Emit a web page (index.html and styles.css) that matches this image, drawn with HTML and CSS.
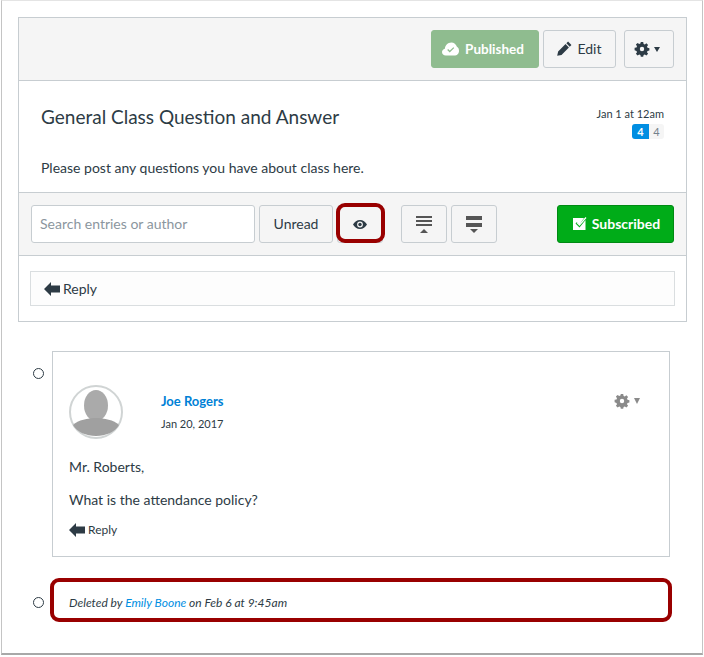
FILE: index.html
```html
<!DOCTYPE html>
<html lang="en">
<head>
<meta charset="utf-8">
<title>General Class Question and Answer</title>
<link rel="stylesheet" href="styles.css">
</head>
<body>
<div class="window">
  <section class="card">
    <header class="head-bar">
      <button class="btn btn-published">
        <svg class="ico-cloud" viewBox="0 0 18 14"><path fill="#fff" d="M4 14C1.8 14 0 12.4 0 10.3 0 8.4 1.3 7 3 6.700 3.400 3 6.300 0 9.800 0c2.900 0 5.300 2 6 4.700C17.300 5.500 18 7 18 9c0 2.800-2.200 5-5 5z"/><path fill="none" stroke="#8fbc8f" stroke-width="1.300" d="M6 7.500l2.200 2.200L12.500 5.500"/></svg>
        Published
      </button>
      <button class="btn btn-edit">
        <svg class="ico-pencil" viewBox="0 0 16 16"><path fill="#2d3b45" d="M11.800.6l3.600 3.600-1.800 1.800L10 2.400zM9.100 3.300l3.600 3.600-7.900 7.900-4.600 1 1-4.600z"/></svg>
        Edit
      </button>
      <button class="btn btn-gear">
        <svg class="ico-gear" viewBox="0 0 14 14"><use href="#gear"/></svg>
        <span class="caret"></span>
      </button>
    </header>
    <div class="topic">
      <div class="topic-top">
        <h1 class="topic-title">General Class Question and Answer</h1>
        <div class="topic-meta">
          <div class="topic-date">Jan 1 at 12am</div>
          <div class="badges"><span class="badge-blue">4</span><span class="badge-gray">4</span></div>
        </div>
      </div>
      <p class="topic-text">Please post any questions you have about class here.</p>
    </div>
    <div class="toolbar">
      <div class="search">Search entries or author</div>
      <button class="btn btn-unread">Unread</button>
      <button class="btn btn-eye">
        <svg class="ico-eye" viewBox="0 0 14 9"><path fill="#2d3b45" fill-rule="evenodd" d="M7 0c3 0 5.500 1.800 7 4.500C12.500 7.200 10 9 7 9S1.500 7.200 0 4.500C1.500 1.800 4 0 7 0zm0 1.600a2.900 2.900 0 1 0 0 5.800 2.900 2.900 0 0 0 0-5.800z"/><circle cx="7" cy="4.500" r="1.700" fill="#2d3b45"/></svg>
        <span class="eye-mark"></span>
      </button>
      <button class="btn btn-fold btn-collapse">
        <svg class="ico-fold" viewBox="0 0 16 17"><path fill="#555" d="M0 0h16v2H0zM0 4h16v2H0zM0 8h16v2H0zM8 13l4 4H4z"/></svg>
      </button>
      <button class="btn btn-fold">
        <svg class="ico-fold" viewBox="0 0 16 17"><path fill="#555" d="M0 0h16v4H0zM0 7h16v4H0zM4 13h8l-4 4z"/></svg>
      </button>
      <button class="btn btn-subscribed">
        <svg class="ico-check" viewBox="0 0 14 13"><path fill="#fff" d="M0 1h11L6.500 7.500 4 5 2.500 6.500l4 4L12.500 3v10H0z"/><path fill="none" stroke="#fff" stroke-width="1.300" d="M4 5.500l2.500 2.500L13 .5"/></svg>
        Subscribed
      </button>
    </div>
    <div class="reply-area">
      <div class="reply-box">
        <svg class="ico-reply" viewBox="0 0 16 14"><use href="#reply"/></svg>
        Reply
      </div>
    </div>
  </section>

  <section class="entries">
    <div class="entry-row">
      <span class="bullet"></span>
      <article class="entry">
        <div class="entry-head">
          <div class="avatar">
            <svg viewBox="0 0 54 54"><circle cx="27" cy="27" r="26" fill="#fff" stroke="#d0d4d4" stroke-width="2"/><ellipse cx="27" cy="20.500" rx="12" ry="15.500" fill="#aaa"/><path fill="#a0a0a0" d="M4 40c5-5 15-7 23-7s18 2 23 7c-4 7-13 11-23 11S8 47 4 40z"/></svg>
          </div>
          <div class="entry-author">
            <a class="author-link">Joe Rogers</a>
            <div class="entry-date">Jan 20, 2017</div>
          </div>
          <div class="entry-menu">
            <svg class="ico-gear-sm" viewBox="0 0 14 14"><use href="#gear"/></svg>
            <span class="caret caret-muted"></span>
          </div>
        </div>
        <p class="entry-line">Mr. Roberts,</p>
        <p class="entry-line entry-line-2">What is the attendance policy?</p>
        <div class="entry-reply">
          <svg class="ico-reply" viewBox="0 0 16 14"><use href="#reply"/></svg>
          Reply
        </div>
      </article>
    </div>
    <div class="entry-row deleted-row">
      <span class="bullet"></span>
      <div class="deleted"><em>Deleted by <a class="deleted-link">Emily Boone</a> on Feb 6 at 9:45am</em></div>
    </div>
  </section>
</div>

<svg class="defs" aria-hidden="true">
  <defs>
    <path id="gear" d="M5.800 0h2.400l.4 1.900 1.200.5 1.600-1.100 1.700 1.700-1.100 1.600.5 1.200 1.900.4v2.400l-1.900.4-.5 1.200 1.100 1.600-1.700 1.700-1.600-1.100-1.200.5-.4 1.900H5.800l-.4-1.900-1.200-.5-1.600 1.100-1.700-1.700 1.100-1.600-.5-1.200L-.4 8.200V5.800l1.900-.4.500-1.200L.9 2.600 2.600.9l1.600 1.100 1.200-.5zM7 4.800a2.200 2.200 0 1 0 0 4.400 2.200 2.200 0 0 0 0-4.400z" fill-rule="evenodd"/>
    <path id="reply" d="M0 7l7-7v3.500h9v7H7V14z"/>
  </defs>
</svg>
</body>
</html>
```

FILE: styles.css
```css
* { box-sizing: border-box; }
html, body { margin: 0; padding: 0; background: #fff; }
body {
  font-family: Lato, "Open Sans", sans-serif;
  font-size: 14px;
  color: #2d3b45;
}
.defs { width: 0; height: 0; display: block; overflow: hidden; }

.window {
  width: 702px;
  height: 655px;
  margin-left: 1px;
  padding: 16px 14px 0 16px;
  border-top: 1px solid #e4e4e4;
  border-left: 1px solid #c4c4c4;
  border-right: 1px solid #c4c4c4;
  border-bottom: 2px solid #a8a8a8;
}

.card {
  width: 669px;
  height: 305px;
  border: 1px solid #c7cdd1;
}
.head-bar {
  height: 63px;
  background: #f5f5f5;
  border-bottom: 1px solid #c7cdd1;
  padding: 12px 12px 0 0;
  display: flex;
  justify-content: flex-end;
}

.btn {
  height: 38px;
  border: 1px solid #c7cdd1;
  border-radius: 3px;
  background: #f5f5f5;
  color: #2d3b45;
  font-family: inherit;
  font-size: 14px;
  padding: 0 0 1px;
  display: flex;
  align-items: center;
  justify-content: center;
  flex: none;
}
.btn-published {
  width: 108px;
  padding: 0 4px 0 0;
  background: #8fbc8f;
  border-color: #8fbc8f;
  color: #fff;
  font-size: 13.500px;
  font-weight: 700;
  gap: 6px;
}
.ico-cloud { width: 17px; height: 14px; }
.btn-edit { width: 73px; margin-left: 4px; gap: 5px; }
.ico-pencil { width: 15px; height: 15px; }
.btn-gear { width: 50px; margin-left: 8px; padding: 0 4px 0 0; gap: 5px; }
.ico-gear { width: 14px; height: 14px; fill: #2d3b45; overflow: visible; }
.caret {
  width: 0;
  height: 0;
  border-left: 3.500px solid transparent;
  border-right: 3.500px solid transparent;
  border-top: 5px solid #2d3b45;
}

.topic { height: 112px; padding: 0 22px 0 22px; background: #fff; border-bottom: 1px solid #c7cdd1; }
.topic-top { display: flex; justify-content: space-between; height: 62px; padding-top: 23px; }
.topic-title { margin: 0; font-size: 19px; font-weight: 400; line-height: 25px; }
.topic-meta { text-align: right; margin-top: 3px; }
.topic-date { font-size: 11px; line-height: 14px; }
.badges { display: flex; justify-content: flex-end; margin-top: 3px; font-size: 11px; line-height: 15px; font-weight: 700; }
.badge-blue { width: 17px; background: #008ee2; color: #fff; text-align: center; border-radius: 3px 0 0 3px; }
.badge-gray { width: 15px; background: #f5f5f5; color: #73818c; text-align: center; border-radius: 0 3px 3px 0; font-weight: 400; }
.topic-text { margin: 0; padding-top: 15px; line-height: 20px; }

.toolbar {
  height: 63px;
  background: #f5f5f5;
  border-bottom: 1px solid #c7cdd1;
  padding: 12px 12px 0 12px;
  display: flex;
}
.search {
  width: 224px;
  height: 38px;
  background: #fff;
  border: 1px solid #c7cdd1;
  border-radius: 3px;
  color: #8b969e;
  line-height: 36px;
  padding-left: 8px;
}
.btn-unread { width: 74px; margin-left: 4px; }
.btn-eye { width: 46px; margin-left: 4px; padding: 0; position: relative; }
.ico-eye { width: 14px; height: 9px; }
.eye-mark {
  position: absolute;
  left: -2px;
  top: -3px;
  width: 49px;
  height: 40px;
  border: 4px solid #990000;
  border-radius: 9px;
}
.btn-fold { width: 46px; margin-left: 4px; padding: 0; }
.btn-collapse { margin-left: 18px; }
.ico-fold { width: 16px; height: 17px; }
.btn-subscribed {
  width: 117px;
  margin-left: auto;
  padding: 0 0 1px 2px;
  background: #00ac18;
  border-color: #008a13;
  color: #fff;
  font-weight: 700;
  gap: 5px;
}
.ico-check { width: 14px; height: 13px; overflow: visible; }

.reply-area { padding: 15px 11px 0 11px; }
.reply-box {
  height: 35px;
  background: #fdfdfd;
  border: 1px solid #dadee0;
  display: flex;
  align-items: center;
  padding-left: 13px;
  gap: 3px;
}
.ico-reply { width: 16px; height: 14px; fill: #2d3b45; flex: none; }

.entries { padding-top: 29px; }
.entry-row { display: flex; }
.bullet {
  width: 11px;
  height: 11px;
  border: 1.500px solid #2d3b45;
  border-radius: 50%;
  margin: 17px 0 0 15px;
  flex: none;
}
.entry {
  width: 618px;
  height: 206px;
  margin-left: 8px;
  border: 1px solid #c7cdd1;
  padding: 33px 16px 0 16px;
  position: relative;
}
.entry-head { display: flex; height: 54px; }
.avatar { width: 54px; height: 54px; }
.avatar svg { width: 54px; height: 54px; display: block; }
.entry-author { margin-left: 38px; padding-top: 7px; }
.author-link { display: block; color: #0081d6; font-weight: 700; font-size: 13px; line-height: 18px; }
.entry-date { font-size: 11px; line-height: 14px; margin-top: 7px; }
.entry-menu { margin-left: auto; margin-right: 13px; padding-top: 9px; display: flex; gap: 5px; }
.ico-gear-sm { width: 14px; height: 14px; fill: #8a8a8a; overflow: visible; }
.caret-muted { border-top: 6px solid #8a8a8a; margin-top: 4px; }
.entry-line { margin: 0; padding-top: 18px; line-height: 20px; }
.entry-line-2 { padding-top: 13px; }
.entry-reply {
  display: flex;
  align-items: center;
  gap: 3px;
  margin-top: 10px;
  font-size: 12px;
  line-height: 20px;
}

.deleted-row { margin-top: 21px; }
.deleted-row .bullet { margin-top: 19px; }
.deleted {
  width: 622px;
  height: 44px;
  margin-left: 6px;
  border: 4px solid #990000;
  border-radius: 9px;
  padding-left: 15px;
  font-size: 12px;
  line-height: 41px;
}
.deleted-link { color: #008ee2; }
```
